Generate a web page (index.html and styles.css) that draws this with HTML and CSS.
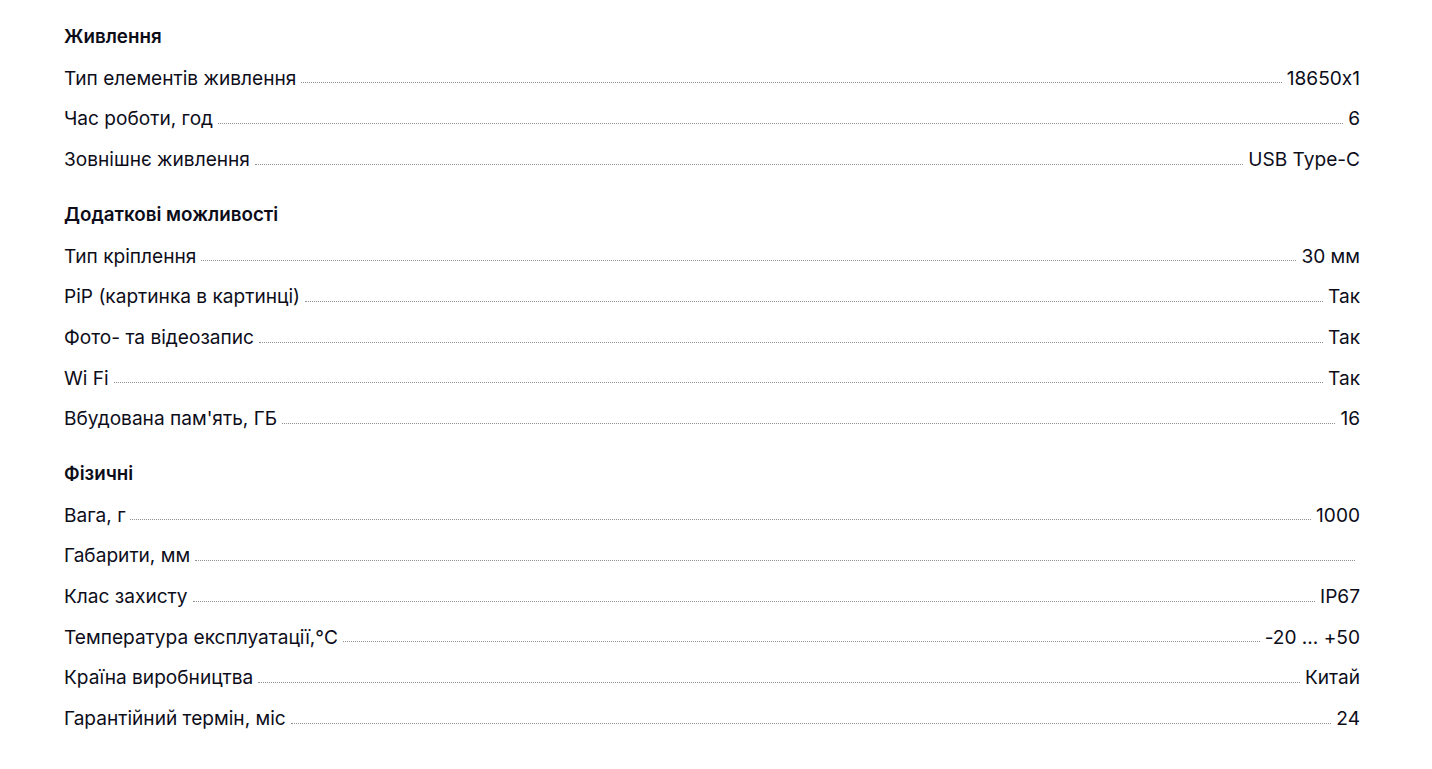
FILE: index.html
```html
<!DOCTYPE html>
<html lang="uk">
<head>
<meta charset="utf-8">
<link rel="stylesheet" href="styles.css">
</head>
<body>
<div class="specs">
  <section class="group">
    <h3 class="group-title">Живлення</h3>
    <div class="row"><span class="label">Тип елементів живлення</span><span class="dots"></span><span class="value">18650x1</span></div>
    <div class="row"><span class="label">Час роботи, год</span><span class="dots"></span><span class="value">6</span></div>
    <div class="row"><span class="label">Зовнішнє живлення</span><span class="dots"></span><span class="value">USB Type-C</span></div>
  </section>
  <section class="group">
    <h3 class="group-title">Додаткові можливості</h3>
    <div class="row"><span class="label">Тип кріплення</span><span class="dots"></span><span class="value">30 мм</span></div>
    <div class="row"><span class="label">PiP (картинка в картинці)</span><span class="dots"></span><span class="value">Так</span></div>
    <div class="row"><span class="label">Фото- та відеозапис</span><span class="dots"></span><span class="value">Так</span></div>
    <div class="row"><span class="label">Wi Fi</span><span class="dots"></span><span class="value">Так</span></div>
    <div class="row"><span class="label">Вбудована пам'ять, ГБ</span><span class="dots"></span><span class="value">16</span></div>
  </section>
  <section class="group">
    <h3 class="group-title">Фізичні</h3>
    <div class="row"><span class="label">Вага, г</span><span class="dots"></span><span class="value">1000</span></div>
    <div class="row"><span class="label">Габарити, мм</span><span class="dots"></span><span class="value"></span></div>
    <div class="row"><span class="label">Клас захисту</span><span class="dots"></span><span class="value">IP67</span></div>
    <div class="row"><span class="label">Температура експлуатації,°C</span><span class="dots"></span><span class="value">-20 ... +50</span></div>
    <div class="row"><span class="label">Країна виробництва</span><span class="dots"></span><span class="value">Китай</span></div>
    <div class="row"><span class="label">Гарантійний термін, міс</span><span class="dots"></span><span class="value">24</span></div>
  </section>
</div>
</body>
</html>
```
FILE: styles.css
```css
html, body {
  margin: 0;
  padding: 0;
  background: #ffffff;
}
body {
  font-family: Inter, "Noto Sans", sans-serif;
  font-feature-settings: "calt" 0;
  color: #0d0d1a;
}
.specs {
  padding: 17px 72px 0 64px;
  display: flex;
  flex-direction: column;
  gap: 15.4px;
}
.group {
  display: flex;
  flex-direction: column;
}
.group-title {
  margin: 0;
  font-size: 18.8px;
  font-weight: 600;
  height: 40.65px;
  line-height: 40.65px;
}
.row {
  display: flex;
  align-items: baseline;
  height: 40.65px;
  line-height: 40.65px;
  font-size: 19.1px;
}
.label, .value {
  white-space: nowrap;
}
.dots {
  flex: 1;
  align-self: flex-end;
  margin: 0 5px 15px;
  border-bottom: 1px dotted #8f8f8f;
  min-width: 10px;
}
```
